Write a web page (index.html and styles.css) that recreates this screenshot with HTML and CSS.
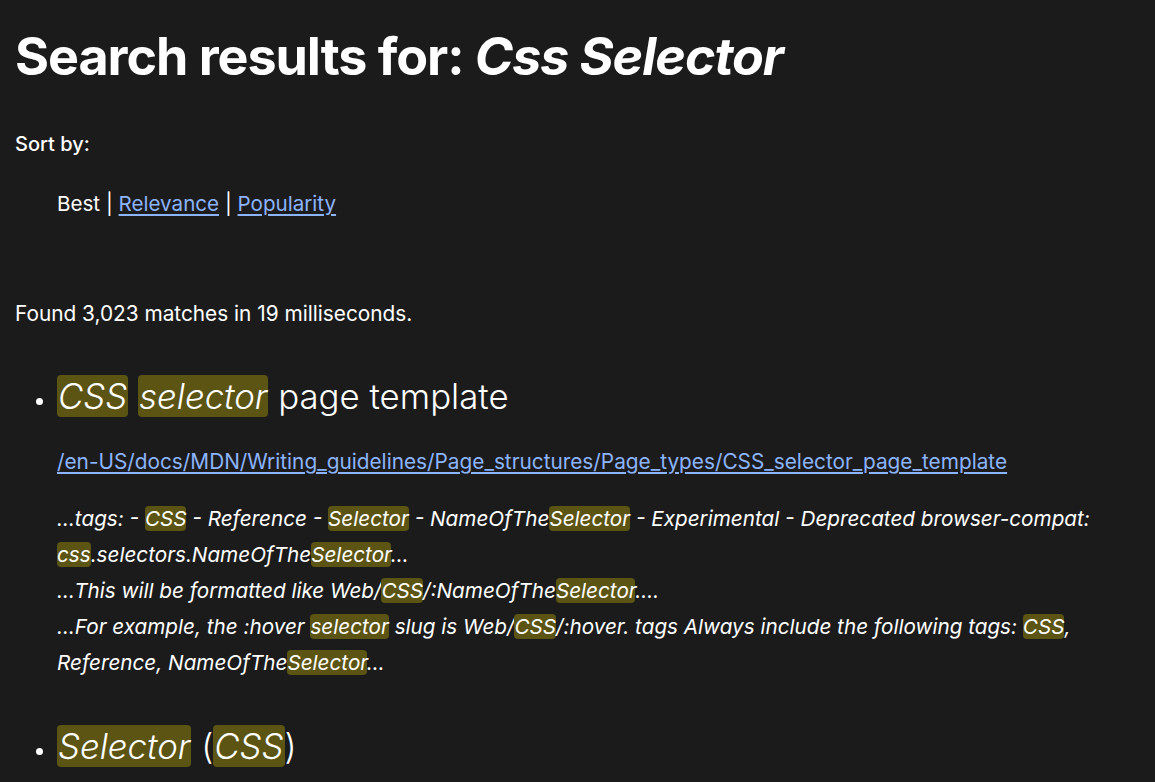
FILE: index.html
```html
<!DOCTYPE html>
<html lang="en">
<head>
<meta charset="utf-8">
<title>Search results</title>
<link rel="stylesheet" href="styles.css">
</head>
<body>
<main class="page">
  <h1 class="title">Search results for: <em>Css Selector</em></h1>
  <div class="sort">
    <p class="sort-label">Sort by:</p>
    <ul class="sort-options">
      <li>Best <span class="sep">|</span> <a href="#">Relevance</a> <span class="sep">|</span> <a href="#">Popularity</a></li>
    </ul>
  </div>
  <p class="found">Found 3,023 matches in 19 milliseconds.</p>
  <ul class="results">
    <li class="result">
      <h2 class="result-title"><mark>CSS</mark> <mark>selector</mark> page template</h2>
      <p class="result-url"><a href="#">/en-US/docs/MDN/Writing_guidelines/Page_structures/Page_types/CSS_selector_page_template</a></p>
      <p class="snippet">…tags: - <mark>CSS</mark> - Reference - <mark>Selector</mark> - NameOfThe<mark>Selector</mark> - Experimental - Deprecated browser-compat: <mark>css</mark>.selectors.NameOfThe<mark>Selector</mark>…<br>…This will be formatted like Web/<mark>CSS</mark>/:NameOfThe<mark>Selector</mark>.…<br>…For example, the :hover <mark>selector</mark> slug is Web/<mark>CSS</mark>/:hover. tags Always include the following tags: <mark>CSS</mark>, Reference, NameOfThe<mark>Selector</mark>…</p>
    </li>
    <li class="result">
      <h2 class="result-title"><mark>Selector</mark> (<mark>CSS</mark>)</h2>
    </li>
  </ul>
</main>
</body>
</html>
```

FILE: styles.css
```css
html, body {
  margin: 0;
  background: #1b1b1b;
  color: #ffffff;
  font-family: Inter, "Noto Sans", sans-serif;
}
.page {
  padding: 0 15px;
}
.title {
  margin: 0;
  padding-top: 26px;
  font-size: 52px;
  line-height: 62px;
  font-weight: 700;
  letter-spacing: -0.02em;
}
.title em {
  font-style: italic;
}
.sort-label {
  margin: 42px 0 0;
  font-size: 20px;
  font-weight: 500;
  line-height: 28px;
}
.sort-options {
  list-style: none;
  margin: 32px 0 0;
  padding-left: 42px;
  font-size: 20.6px;
  line-height: 28px;
}
a {
  color: #8cb4ff;
  text-decoration: underline;
  text-underline-offset: 3px;
}
.found {
  margin: 82px 0 0;
  font-size: 20.8px;
  line-height: 28px;
}
.results {
  margin: 46px 0 0;
  padding-left: 42px;
}
.result::marker {
  font-size: 22px;
}
.result-title {
  margin: 0;
  font-size: 34.8px;
  line-height: 44px;
  font-weight: 300;
}
mark {
  background: #5c5413;
  color: #ffffff;
  border-radius: 4px;
  font-style: italic;
  padding: 0 1px;
}
.result-url {
  margin: 30px 0 0;
  font-size: 20.8px;
  line-height: 28px;
}
.snippet {
  margin: 25px 0 0;
  font-size: 20.7px;
  line-height: 36px;
  font-style: italic;
}
.snippet mark {
  padding: 0;
}
.result + .result {
  margin-top: 43px;
}
```
